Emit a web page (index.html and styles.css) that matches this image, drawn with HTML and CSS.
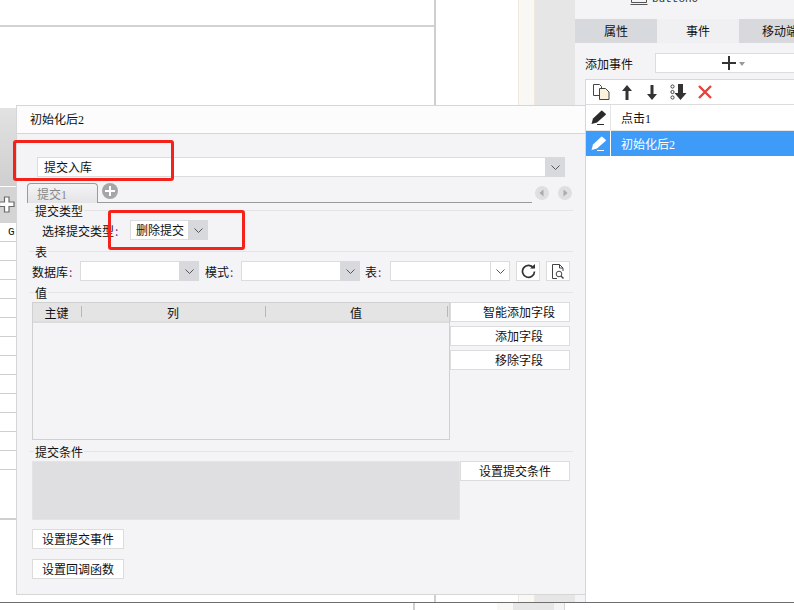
FILE: index.html
```html
<!DOCTYPE html>
<html lang="zh-CN">
<head>
<meta charset="UTF-8" />
<meta name="viewport" content="width=device-width, initial-scale=1" />
<title>初始化后2</title>
<link rel="stylesheet" href="styles.css">
</head>
<body>
<div id="app">
  <!-- Canvas behind the dialog -->
  <div class="workspace">
    <div class="cell-top"></div>
    <div class="cell-side"></div>
    <div class="cell-low"></div>
    <div class="strip-cream"></div>
    <div class="strip-gray"></div>
    <div class="sheet">
      <div class="sheet-head"></div>
      <div class="sheet-plus">
        <svg width="16" height="17" viewBox="0 0 16 17"><path d="M5.500 1h4.500v5h5v4.500h-5v5.500h-4.500v-5.500h-5v-4.500h5z" fill="#fff" stroke="#6a6a6a" stroke-width="1.200"/></svg>
      </div>
      <div class="sheet-row">G</div>
      <div class="sheet-row"></div>
      <div class="sheet-row"></div>
      <div class="sheet-row"></div>
      <div class="sheet-row"></div>
      <div class="sheet-row"></div>
      <div class="sheet-row"></div>
      <div class="sheet-row"></div>
      <div class="sheet-row"></div>
      <div class="sheet-row"></div>
      <div class="sheet-row"></div>
      <div class="sheet-row"></div>
      <div class="sheet-row"></div>
      <div class="sheet-end"></div>
    </div>
  </div>

  <!-- Right panel -->
  <div class="panel">
    <div class="widget-peek">
      <svg width="18" height="5" viewBox="0 0 18 5"><path d="M1.500 0v2.500h15V0M0.500 4.500h17" fill="none" stroke="#555"/></svg>
      <span>button0</span>
    </div>
    <div class="tabs">
      <div class="tab">属性</div>
      <div class="tab on">事件</div>
      <div class="tab last">移动端</div>
    </div>
    <div class="add-row">
      <span>添加事件</span>
      <div class="add-btn">
        <svg width="14" height="14" viewBox="0 0 14 14"><path d="M6 0h2v6h6v2h-6v6h-2v-6h-6v-2h6z" fill="#333"/></svg>
        <svg class="caret" width="6" height="4" viewBox="0 0 6 4"><path d="M0 0h6l-3 4z" fill="#999"/></svg>
      </div>
    </div>
    <div class="events">
      <div class="events-bar">
        <svg class="ico-copy" width="17" height="16" viewBox="0 0 17 16"><path d="M0.500 0.500h6l2 2v9h-8z" fill="#fff" stroke="#444"/><path d="M6.500 4.500h6l3.500 3.500v7.500h-9.500z" fill="#fdf3dc" stroke="#444"/></svg>
        <svg class="ico-up" width="10" height="15" viewBox="0 0 10 15"><path d="M5 0l5 6h-3.500v9h-3v-9h-3.500z" fill="#333"/></svg>
        <svg class="ico-down" width="10" height="15" viewBox="0 0 10 15"><path d="M5 15l5-6h-3.500v-9h-3v9h-3.500z" fill="#333"/></svg>
        <svg class="ico-all" width="17" height="16" viewBox="0 0 17 16"><g fill="none" stroke="#444"><circle cx="2.500" cy="2.500" r="1.600"/><circle cx="2.500" cy="8" r="1.600"/><circle cx="2.500" cy="13.500" r="1.600"/></g><path d="M8 0h5v9h3.500l-6 7-6-7h3.500z" fill="#333"/></svg>
        <svg class="ico-del" width="14" height="14" viewBox="0 0 14 14"><path d="M1 1l12 12M13 1l-12 12" stroke="#e8413a" stroke-width="2.400" fill="none"/></svg>
      </div>
      <div class="event">
        <div class="event-ico">
          <svg width="16" height="15" viewBox="0 0 16 15"><path d="M0.500 14l1.500-5.500 8.500-8 1 0.500 3.500 3-0.500 1-8.500 7.500z" fill="#2b2b2b"/><path d="M6 14.500h7" stroke="#2b2b2b"/></svg>
        </div>
        <div class="event-name">点击<span class="num">1</span></div>
      </div>
      <div class="event sel">
        <div class="event-ico">
          <svg width="16" height="15" viewBox="0 0 16 15"><path d="M0.500 14l1.500-5.500 8.500-8 1 0.500 3.500 3-0.500 1-8.500 7.500z" fill="#fff"/><path d="M6 14.500h7" stroke="#fff"/></svg>
        </div>
        <div class="event-name">初始化后<span class="num">2</span></div>
      </div>
    </div>
  </div>

  <!-- Submit dialog -->
  <div class="dialog">
    <div class="dialog-title">初始化后<span class="num">2</span></div>
    <div class="dialog-body">
      <div class="combo wide">
        <div class="combo-text">提交入库</div>
        <div class="combo-arrow"><svg class="chev" width="9" height="5" viewBox="0 0 9 5"><path d="M0.500 0.500l4 4 4-4" fill="none" stroke="#555"/></svg></div>
      </div>

      <div class="tabbar">
        <div class="tabstrip">
          <div class="sub-tab">提交<span class="num">1</span></div>
          <svg class="add-tab" width="16" height="16" viewBox="0 0 16 16"><circle cx="8" cy="8" r="8" fill="#a6a6a6"/><path d="M7 3h2v4h4v2h-4v4h-2v-4h-4v-2h4z" fill="#fff"/></svg>
        </div>
        <svg class="nav" width="14" height="14" viewBox="0 0 14 14"><circle cx="7" cy="7" r="7" fill="#dfdfe1"/><path d="M8.500 3.500v7l-4-3.500z" fill="#aaa"/></svg>
        <svg class="nav" width="14" height="14" viewBox="0 0 14 14"><circle cx="7" cy="7" r="7" fill="#dfdfe1"/><path d="M5.500 3.500v7l4-3.500z" fill="#aaa"/></svg>
      </div>

      <div class="group first"><span>提交类型</span></div>
      <div class="type-row">
        <label class="lbl type-lbl">选择提交类型<i>:</i></label>
        <div class="combo small">
          <div class="combo-text">删除提交</div>
          <div class="combo-arrow"><svg class="chev" width="9" height="5" viewBox="0 0 9 5"><path d="M0.500 0.500l4 4 4-4" fill="none" stroke="#555"/></svg></div>
        </div>
      </div>

      <div class="group tbl"><span>表</span></div>
      <div class="db-row">
        <label class="lbl">数据库<i>:</i></label>
        <div class="combo field">
          <div class="combo-text"></div>
          <div class="combo-arrow"><svg class="chev" width="9" height="5" viewBox="0 0 9 5"><path d="M0.500 0.500l4 4 4-4" fill="none" stroke="#555"/></svg></div>
        </div>
        <label class="lbl">模式<i>:</i></label>
        <div class="combo field">
          <div class="combo-text"></div>
          <div class="combo-arrow"><svg class="chev" width="9" height="5" viewBox="0 0 9 5"><path d="M0.500 0.500l4 4 4-4" fill="none" stroke="#555"/></svg></div>
        </div>
        <label class="lbl">表<i>:</i></label>
        <div class="combo field plain">
          <div class="combo-text"></div>
          <div class="combo-arrow"><svg class="chev" width="9" height="5" viewBox="0 0 9 5"><path d="M0.500 0.500l4 4 4-4" fill="none" stroke="#555"/></svg></div>
        </div>
        <div class="icon-btn">
          <svg width="15" height="15" viewBox="0 0 15 15"><path d="M12.500 4a6 6 0 1 0 1 3.500" fill="none" stroke="#333" stroke-width="1.700"/><path d="M9 4.500h5v-4.500z" fill="#333"/></svg>
        </div>
        <div class="icon-btn">
          <svg width="14" height="15" viewBox="0 0 14 15"><path d="M6 14.500h-4.500v-14h7l3.500 3.500v3" fill="none" stroke="#444"/><path d="M8.500 0.500v3.500h3.500" fill="none" stroke="#444"/><circle cx="8" cy="10" r="2.800" fill="none" stroke="#444"/><path d="M10 12l2.500 2.500" stroke="#444" stroke-width="1.500"/></svg>
        </div>
      </div>

      <div class="group val"><span>值</span></div>
      <div class="val-row">
        <div class="grid">
          <div class="grid-head">
            <div class="col key">主键</div>
            <div class="col name">列</div>
            <div class="col value">值</div>
          </div>
        </div>
        <div class="val-btns">
          <div class="btn offset">智能添加字段</div>
          <div class="btn offset">添加字段</div>
          <div class="btn offset">移除字段</div>
        </div>
      </div>

      <div class="group cond"><span>提交条件</span></div>
      <div class="cond-row">
        <div class="cond-box"></div>
        <div class="btn cond-btn">设置提交条件</div>
      </div>

      <div class="btn foot">设置提交事件</div>
      <div class="btn foot">设置回调函数</div>
    </div>
  </div>

  <!-- Strip under the dialog -->
  <div class="bottom">
    <div class="bottom-a"></div>
    <div class="bottom-b"></div>
    <div class="bottom-c"></div>
    <div class="bottom-d"></div>
    <div class="bottom-e"></div>
  </div>

  <!-- Red annotation boxes -->
  <div class="mark mark-a"></div>
  <div class="mark mark-b"></div>
</div>
</body>
</html>
```

FILE: styles.css
```css
* { box-sizing: border-box; }

body {
  margin: 0;
  background: #fff;
  font-family: "Noto Sans CJK SC", "Liberation Sans", sans-serif;
  font-size: 12px;
  color: #111;
}

#app {
  position: relative;
  display: flex;
  width: 794px;
  height: 610px;
  overflow: hidden;
}

.num { font-family: "Liberation Serif", serif; font-size: 12px; }

/* Canvas */
.workspace {
  position: relative;
  width: 575px;
  flex: none;
}
.cell-top {
  position: absolute;
  left: 0; top: 25px;
  width: 434px;
  border-top: 2px solid #d2d2d2;
}
.cell-side {
  position: absolute;
  left: 434px; top: 0;
  height: 105px;
  border-left: 2px solid #cfcfcf;
}
.cell-low {
  position: absolute;
  left: 434px; top: 595px;
  height: 8px;
  border-left: 2px solid #cfcfcf;
}
.strip-cream {
  position: absolute;
  left: 518px; top: 0; bottom: 0;
  width: 17px;
  background: #f9f8f5;
  border-left: 1px solid #f0e8dc;
  border-right: 1px solid #f0e8dc;
}
.strip-gray {
  position: absolute;
  left: 535px; top: 0; bottom: 0;
  width: 40px;
  background: #e6e6e6;
}
.sheet {
  position: absolute;
  left: 0; top: 108px;
  width: 16px;
}
.sheet-head {
  height: 79px;
  background: linear-gradient(#e2e2e2, #cfcfcf);
  border-bottom: 1px solid #fff;
}
.sheet-plus {
  display: flex;
  align-items: center;
  height: 36px;
  background: #d4d4d4;
  padding-bottom: 1px;
}
.sheet-plus svg { margin-left: -1px; }
.sheet-row {
  height: 19px;
  border-bottom: 1px solid #cfcfcf;
  font-family: "Liberation Mono", monospace;
  font-size: 11px;
  line-height: 19px;
  padding-left: 8px;
}
.sheet-end {
  height: 50px;
  border-bottom: 2px solid #cfcfcf;
}

/* Right panel */
.panel {
  flex: 1;
  background: #f4f4f6;
  display: flex;
  flex-direction: column;
}
.widget-peek {
  height: 5px;
  flex: none;
  display: flex;
  align-items: flex-end;
  gap: 4px;
  padding-left: 55px;
  overflow: hidden;
  font-family: "Liberation Mono", monospace;
  font-size: 11px;
  line-height: 5px;
  color: #333;
}
.widget-peek span { height: 5px; position: relative; top: -3px; }
.tabs {
  display: flex;
  flex: none;
  height: 24px;
  margin-top: 14px;
}
.tab {
  width: 82px;
  flex: none;
  background: #d8d9dc;
  text-align: center;
  line-height: 24px;
  font-size: 12px;
}
.tab.on { background: #f0f0f2; }
.tab.last { flex: 1; width: auto; text-align: left; padding-left: 23px; white-space: nowrap; overflow: hidden; }
.add-row {
  display: flex;
  align-items: center;
  gap: 22px;
  height: 20px;
  margin: 10px 0 0 10px;
  flex: none;
}
.add-btn {
  flex: 1;
  height: 20px;
  background: #fff;
  border: 1px solid #dcdcdc;
  border-right: 0;
  display: flex;
  align-items: center;
  padding-left: 66px;
  gap: 3px;
}
.caret { margin-top: 2px; }
.events {
  flex: 1;
  margin: 6px 0 8px 10px;
  background: #fff;
  border: 1px solid #d8d8d8;
  border-right: 0;
  border-bottom: 0;
}
.events-bar {
  height: 25px;
  border-bottom: 1px solid #dcdcdc;
  display: flex;
  align-items: center;
}
.ico-copy { margin-left: 7px; }
.ico-up { margin-left: 12px; }
.ico-down { margin-left: 15px; }
.ico-all { margin-left: 13px; }
.ico-del { margin-left: 11px; }
.event {
  display: flex;
  height: 26px;
  border-bottom: 1px solid #e6e6e6;
}
.event.sel {
  background: #3f9bf8;
  color: #fff;
  border-bottom: 0;
  height: 25px;
}
.event-ico {
  width: 25px;
  flex: none;
  border-right: 1px solid #e6e6e6;
  display: flex;
  align-items: center;
  padding-left: 5px;
}
.sel .event-ico { border-right-color: #fff; }
.event-name { padding-left: 10px; line-height: 25px; }

/* Dialog */
.dialog {
  position: absolute;
  left: 16px; top: 105px;
  width: 570px;
  height: 490px;
  background: #f4f4f6;
  border: 1px solid #d6d6d6;
}
.dialog-title {
  height: 28px;
  background: #fcfcfd;
  border-bottom: 1px solid #d6d6d6;
  padding-left: 13px;
  line-height: 25px;
}
.dialog-body { padding: 23px 15px 0 15px; }

.combo {
  display: flex;
  height: 20px;
  background: #fff;
  border: 1px solid #dcdcdc;
}
.combo-text { flex: 1; padding-left: 6px; line-height: 18px; white-space: nowrap; }
.combo-arrow {
  width: 20px;
  flex: none;
  background: #d8d9dc;
  display: flex;
  align-items: center;
  justify-content: center;
  margin: -1px -1px -1px 0;
}
.combo.wide { margin-left: 5px; width: 528px; }
.combo.small { width: 78px; }
.combo.small .combo-text { padding-left: 5px; }
.combo.field { width: 119px; flex: none; }
.combo.plain { width: 120px; }
.combo.plain .combo-arrow { background: #fff; border-left: 1px solid #dcdcdc; margin: 0; width: 19px; }

.tabbar {
  display: flex;
  align-items: flex-start;
  height: 20px;
  margin: 6px 0 0 -5px;
}
.tabstrip {
  display: flex;
  align-items: flex-start;
  width: 505px;
  height: 20px;
  flex: none;
  border-bottom: 1px solid #9a9a9a;
}
.sub-tab {
  width: 71px;
  height: 20px;
  flex: none;
  border: 1px solid #9a9a9a;
  border-bottom: 0;
  border-radius: 4px 4px 0 0;
  background: linear-gradient(#f4f4f6, #e4e4e6);
  color: #888;
  padding-left: 9px;
  line-height: 20px;
}
.add-tab { flex: none; margin: 0 0 0 4px; }
.nav { flex: none; margin: 3px 0 0 3px; }
.nav + .nav { margin-left: 9px; }

.group {
  position: relative;
  height: 14px;
  margin-left: -3px;
  width: 544px;
}
.group::before {
  content: "";
  position: absolute;
  left: 0; right: 0; top: 7px;
  border-top: 1px solid #e4e4e6;
}
.group span {
  position: relative;
  top: -1px;
  margin-left: 5px;
  padding: 0 1px;
  background: #f4f4f6;
  line-height: 14px;
  display: inline-block;
}
.group.tbl, .group.val, .group.cond { margin-top: 4px; }

.lbl { flex: none; white-space: nowrap; }
.lbl i { font-style: normal; color: #7a2a8a; padding-left: 1px; }
.type-row, .db-row {
  display: flex;
  align-items: center;
  height: 20px;
  margin-top: 3px;
}
.type-lbl { margin-left: 10px; width: 88px; }
.db-row .lbl { width: 48px; }
.db-row .lbl:nth-of-type(2) { width: 36px; margin-left: 6px; }
.db-row .lbl:nth-of-type(3) { width: 25px; margin-left: 5px; }
.icon-btn {
  width: 24px;
  height: 20px;
  flex: none;
  margin-left: 6px;
  background: #fff;
  border: 1px solid #dcdcdc;
  display: flex;
  align-items: center;
  justify-content: center;
}

.val-row {
  display: flex;
  margin-top: 3px;
}
.grid {
  width: 418px;
  height: 138px;
  flex: none;
  border: 1px solid #d0d0d0;
}
.grid-head {
  display: flex;
  height: 20px;
  background: #e4e4e4;
  border-bottom: 2px solid #dcdcdc;
  line-height: 19px;
  text-align: center;
}
.col { position: relative; padding-right: 2px; }
.col::after {
  content: "";
  position: absolute;
  right: 0; top: 3px; bottom: 4px;
  border-right: 1px solid #b8b8ae;
}
.col.key { width: 49px; }
.col.name { width: 184px; }
.col.value { width: 182px; }
.val-btns {
  display: flex;
  flex-direction: column;
  gap: 4px;
}
.btn {
  height: 20px;
  background: #fff;
  border: 1px solid #dcdcdc;
  text-align: center;
  line-height: 18px;
  white-space: nowrap;
}
.val-btns .btn { width: 120px; }
.btn.offset { padding-left: 18px; }

.cond-row {
  display: flex;
  align-items: flex-start;
  margin-top: 3px;
}
.cond-box {
  width: 428px;
  height: 59px;
  flex: none;
  background: #dfdfe1;
  border: 1px solid #e4e4e6;
}
.cond-btn { width: 110px; }
.btn.foot { width: 92px; margin-top: 10px; }
.cond-row + .btn.foot { margin-top: 9px; }

/* Bottom strip */
.bottom {
  position: absolute;
  left: 0; right: 0; bottom: 0;
  height: 8px;
  border-top: 1px solid #6e6e6e;
  background: #fff;
  display: flex;
}
.bottom-a { width: 415px; border-right: 2px solid #cfcfcf; }
.bottom-b { width: 82px; }
.bottom-c { width: 16px; background: #f9f8f5; }
.bottom-d { width: 41px; background: #e6e6e6; }
.bottom-e { width: 11px; background: #f4f4f6; border-right: 1px solid #d6d6d6; }

/* Red annotation boxes */
.mark {
  position: absolute;
  border: 3px solid #f5221b;
  border-radius: 3px;
}
.mark-a { left: 13px; top: 140px; width: 161px; height: 41px; }
.mark-b { left: 108px; top: 210px; width: 137px; height: 40px; }
```
